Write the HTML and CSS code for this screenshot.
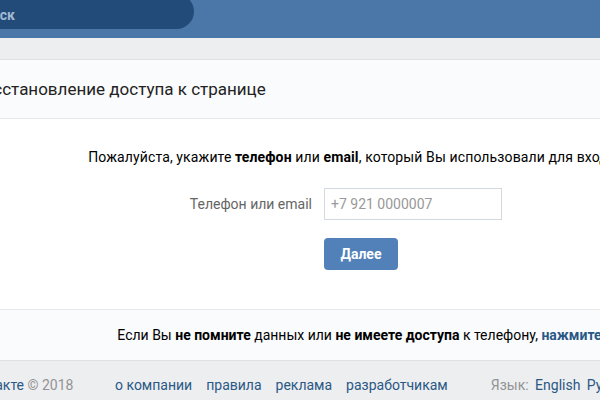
FILE: index.html
```html
<!DOCTYPE html>
<html lang="ru">
<head>
  <meta charset="UTF-8">
  <title>Восстановление доступа к странице</title>
  <link rel="stylesheet" href="styles.css">
</head>
<body>
  <header class="topbar">
    <div class="search">Поиск</div>
  </header>
  <div class="page">
    <div class="card">
      <div class="card-head">Восстановление доступа к странице</div>
      <div class="card-body">
        <p class="intro">Пожалуйста, укажите <b>телефон</b> или <b>email</b>, который Вы использовали для входа на сайт.</p>
        <div class="restore-form">
          <label class="field-label" for="login">Телефон или email</label>
          <input class="field" id="login" type="text" placeholder="+7 921 0000007">
          <button class="btn" type="button">Далее</button>
        </div>
      </div>
      <div class="card-foot">
        Если Вы <b>не помните</b> данных или <b>не имеете доступа</b> к телефону, <a href="#">нажмите сюда</a>.
      </div>
    </div>
    <footer class="footer">
      <div class="copy"><a href="#">ВКонтакте</a> © 2018</div>
      <nav class="links">
        <a href="#">о компании</a>
        <a href="#">правила</a>
        <a href="#">реклама</a>
        <a href="#">разработчикам</a>
      </nav>
      <div class="lang">Язык: <a href="#">English</a> <a href="#">Русский</a></div>
    </footer>
  </div>
</body>
</html>
```

FILE: styles.css
```css
body {
  margin: 0;
  background: #edeef0;
  font-family: Roboto, "Open Sans", Arial, sans-serif;
  font-size: 14px;
  color: #000;
  overflow: hidden;
}
a {
  color: #2a5885;
  text-decoration: none;
}
.topbar {
  height: 38px;
  background: #4a76a8;
  overflow: hidden;
}
.search {
  width: 220px;
  height: 35px;
  margin: -6px 0 0 -60px;
  padding-left: 34px;
  line-height: 42px;
  background: #224b7a;
  border-radius: 18px;
  color: #a4b8d0;
  font-weight: bold;
}
.page {
  width: 860px;
  margin: 21px 0 0 -50px;
}
.card {
  background: #fff;
  border: 1px solid #dfe1e5;
  border-right: none;
}
.card-head {
  height: 58px;
  display: flex;
  align-items: center;
  padding-left: 22px;
  background: #fafbfc;
  border-bottom: 1px solid #e7e8ec;
  font-size: 17px;
  color: #222;
}
.card-body {
  padding: 30px 0 39px;
  text-align: center;
}
.intro {
  margin: 0 0 23px;
  line-height: 16px;
  color: #000;
  letter-spacing: 0.12px;
}
.restore-form {
  display: grid;
  grid-template-columns: 124px 178px;
  justify-content: center;
  align-items: center;
  column-gap: 12px;
  row-gap: 18px;
  padding-right: 71px;
  text-align: left;
}
.field-label {
  color: #656565;
  text-align: right;
  white-space: nowrap;
}
.field {
  height: 32px;
  box-sizing: border-box;
  border: 1px solid #d3d9de;
  padding: 0 6px;
  font: inherit;
  color: #000;
}
.field::placeholder {
  color: #999;
}
.btn {
  grid-column: 2;
  justify-self: start;
  width: 74px;
  height: 32px;
  border: none;
  border-radius: 4px;
  background: #5181b8;
  color: #fff;
  font: inherit;
  font-weight: bold;
  cursor: pointer;
}
.card-foot {
  height: 50px;
  line-height: 50px;
  text-align: center;
  background: #fafbfc;
  border-top: 1px solid #e7e8ec;
  white-space: nowrap;
}
.card-foot a {
  font-weight: bold;
}
.footer {
  display: flex;
  align-items: center;
  padding: 16px 0 0;
  color: #939393;
}
.copy {
  width: 140px;
  padding-left: 5px;
  text-align: left;
}
.links {
  display: flex;
  gap: 14px;
  margin-left: 20px;
}
.lang {
  margin-left: 43px;
}
.lang a {
  margin-left: 3px;
}
```
